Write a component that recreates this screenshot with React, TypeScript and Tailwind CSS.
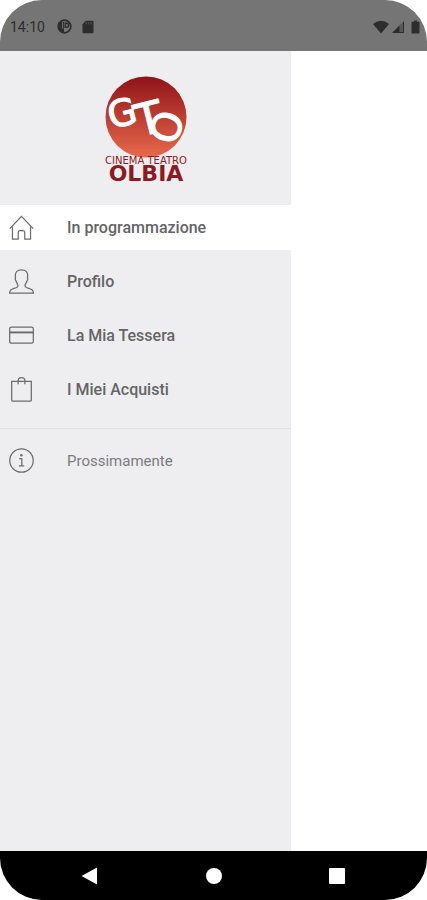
import type { ReactNode } from 'react';

type MenuItem = {
  label: string;
  icon: ReactNode;
  active?: boolean;
};

const line = {
  width: 25,
  height: 25,
  viewBox: '0 0 26 26',
  fill: 'none',
  stroke: '#6c6c6e',
  strokeWidth: 1.3,
  'aria-hidden': true,
};

const HomeIcon = () => (
  <svg {...line}>
    <path d="M3.600 12v13.200h6V18.500q0-2.200 2.200-2.200h2.400q2.200 0 2.200 2.200v6.700h6V12" />
    <path d="M.8 14.200 13 1.400l12.200 12.800" />
  </svg>
);

const PersonIcon = () => (
  <svg {...line}>
    <path d="M13 .8c-4.200 0-6.600 2.400-6.400 6.200.1 1 .2 1.700.1 2.500-.7 1.500.3 2.800.9 3.500.4 1.900 1.400 2.700 1.700 3.800.3 1.500-.5 2.200-2 2.700-3.800 1.300-6.600 1.700-6.700 5.700h24.800c-.1-4-2.900-4.400-6.700-5.700-1.500-.5-2.300-1.200-2-2.700.3-1.100 1.300-1.900 1.700-3.800.6-.7 1.600-2 .9-3.500-.1-.8 0-1.500.1-2.500C19.600 3.200 17.200.8 13 .8z" />
  </svg>
);

const CardIcon = () => (
  <svg {...line}>
    <rect x=".7" y="4.200" width="24.600" height="16.800" rx="1.800" />
    <path d="M.7 9.800h24.600" strokeWidth="2" />
  </svg>
);

const BagIcon = () => (
  <svg {...line}>
    <path d="M2.800 4.500h20.400v19.300q0 1.300-1.300 1.300H4.100q-1.300 0-1.300-1.300z" />
    <path d="M9.500 7.500V3.800q0-3.100 3.500-3.100t3.500 3.100v3.700" />
  </svg>
);

const InfoIcon = () => (
  <svg {...line}>
    <circle cx="13" cy="13" r="12.200" />
    <path d="M10.500 11h2.800v7.500M10.300 18.700h5.600" />
    <circle cx="12.900" cy="7.500" r="1.300" fill="#6c6c6e" stroke="none" />
  </svg>
);

const mainItems: MenuItem[] = [
  { label: 'In programmazione', icon: <HomeIcon />, active: true },
  { label: 'Profilo', icon: <PersonIcon /> },
  { label: 'La Mia Tessera', icon: <CardIcon /> },
  { label: 'I Miei Acquisti', icon: <BagIcon /> },
];

function StatusBar() {
  return (
    <header className="flex h-[51px] items-center justify-between bg-[#757575] pt-0.5 pr-[7px] pl-2.5 text-[#2d2d2d]">
      <div className="flex items-center">
        <span className="text-[14px] leading-5">14:10</span>
        <svg className="ml-3" width="15" height="15" viewBox="0 0 15 15" aria-hidden="true">
          <circle cx="7.500" cy="7.500" r="6.300" fill="none" stroke="currentColor" strokeWidth="1.700" />
          <path d="M1 3.500 7 3v10.500L4 13 1 9z" fill="currentColor" />
          <path d="M8.200 4.300h1.600q1.700 0 1.700 2t-1.700 2H8.200z" fill="none" stroke="currentColor" strokeWidth="1.400" />
          <path d="M5.600 3.500v6.300" stroke="#757575" strokeWidth="1" />
        </svg>
        <svg className="ml-2.5" width="12" height="14" viewBox="0 0 12 14" aria-hidden="true">
          <path d="M4 .8h6.500q1 0 1 1v10.400q0 1-1 1h-9q-1 0-1-1V4.300z" fill="currentColor" />
          <path d="M4.300 2.300v2M6.700 2.300v2M9.100 2.300v2" stroke="#757575" strokeWidth=".6" />
        </svg>
      </div>
      <div className="flex items-center">
        <svg width="16" height="14" viewBox="0 0 16 14" aria-hidden="true">
          <path d="M0 4Q8-2.500 16 4L8 13.500z" fill="currentColor" />
        </svg>
        <svg className="ml-0.5" width="14" height="14" viewBox="0 0 14 14" aria-hidden="true">
          <path d="M13 .8V13H1z" fill="currentColor" opacity=".4" />
          <path d="M8.500 5.500V13H1z" fill="currentColor" />
          <path d="M12.500 2v10.500H2.200" fill="none" stroke="currentColor" />
        </svg>
        <svg className="ml-1.5" width="9" height="14" viewBox="0 0 9 14" aria-hidden="true">
          <path d="M3 .5h3v1.300h1.500q1 0 1 1V12.500q0 1-1 1h-6q-1 0-1-1V2.800q0-1 1-1H3z" fill="currentColor" />
        </svg>
      </div>
    </header>
  );
}

function Logo() {
  return (
    <svg className="mx-auto block overflow-visible" width="120" height="116" viewBox="-14 0 120 116" role="img" aria-label="Cinema Teatro Olbia">
      <defs>
        <linearGradient id="disc" x1="0" y1="0" x2="0" y2="1">
          <stop offset="0" stopColor="#8f1219" />
          <stop offset=".45" stopColor="#b83a30" />
          <stop offset="1" stopColor="#e8694b" />
        </linearGradient>
      </defs>
      <circle cx="46" cy="42" r="40.500" fill="url(#disc)" />
      <g fill="#fff" stroke="#fff" strokeWidth="1.200" fontFamily="'DejaVu Sans', sans-serif" textAnchor="middle">
        <text transform="translate(22 38) rotate(-14)" y="13" fontSize="37">G</text>
        <text transform="translate(49 44) rotate(-14)" y="15" fontSize="44">T</text>
        <text transform="translate(67 52) rotate(108)" y="15" fontSize="40">O</text>
      </g>
      <g fill="#8c1a20" fontFamily="'DejaVu Sans', sans-serif" textAnchor="middle">
        <text x="46" y="89" fontSize="10">CINEMA TEATRO</text>
        <text x="46" y="106" fontSize="22" fontWeight="700">OLBIA</text>
      </g>
    </svg>
  );
}

function MenuLink({ item, light = false }: { item: MenuItem; light?: boolean }) {
  return (
    <a
      href="#"
      aria-current={item.active ? 'page' : undefined}
      className={`flex h-[45px] items-center gap-[33px] pl-[9px] ${item.active ? 'bg-white' : ''}`}
    >
      {item.icon}
      <span className={light ? 'text-[15px] leading-5 text-[#7b7b7d]' : 'text-[16px] leading-5 font-medium text-[#646466]'}>
        {item.label}
      </span>
    </a>
  );
}

function NavBar() {
  return (
    <footer className="flex h-[49px] items-center justify-between bg-black px-20 text-white">
      <button type="button" aria-label="Indietro">
        <svg width="18" height="18" viewBox="0 0 18 18" fill="currentColor"><path d="M1.500 9 17 .5v17z" /></svg>
      </button>
      <button type="button" aria-label="Home">
        <svg width="18" height="18" viewBox="0 0 18 18" fill="currentColor"><circle cx="9" cy="9" r="8" /></svg>
      </button>
      <button type="button" aria-label="Recenti">
        <svg width="18" height="18" viewBox="0 0 18 18" fill="currentColor"><rect x="0" y="1" width="16" height="16" rx="1" /></svg>
      </button>
    </footer>
  );
}

export default function App() {
  return (
    <div className="min-h-screen bg-white font-[Roboto,sans-serif]">
      <div className="flex min-h-screen flex-col overflow-hidden rounded-[42px] bg-white">
        <StatusBar />
        <div className="flex flex-1">
          <aside className="w-[291px] bg-[#eeeef0]">
            <div className="h-[154px] pt-6">
              <Logo />
            </div>
            <nav>
              <ul className="flex flex-col gap-[9px]">
                {mainItems.map(item => (
                  <li key={item.label}>
                    <MenuLink item={item} />
                  </li>
                ))}
              </ul>
              <div className="mt-4 border-t border-[#e2e2e4] pt-[9px]">
                <MenuLink item={{ label: 'Prossimamente', icon: <InfoIcon /> }} light />
              </div>
            </nav>
          </aside>
          <main className="flex-1 bg-white" />
        </div>
        <NavBar />
      </div>
    </div>
  );
}
